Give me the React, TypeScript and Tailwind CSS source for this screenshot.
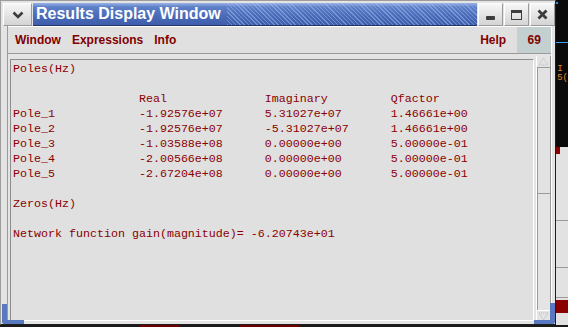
import React from "react";

const poles = [
  ["Pole_1", "-1.92576e+07", "5.31027e+07", "1.46661e+00"],
  ["Pole_2", "-1.92576e+07", "-5.31027e+07", "1.46661e+00"],
  ["Pole_3", "-1.03588e+08", "0.00000e+00", "5.00000e-01"],
  ["Pole_4", "-2.00566e+08", "0.00000e+00", "5.00000e-01"],
  ["Pole_5", "-2.67204e+08", "0.00000e+00", "5.00000e-01"],
];

const col = (s: string) => s.padEnd(18, " ");

const lines = [
  "Poles(Hz)",
  "",
  col("") + col("Real") + col("Imaginary") + "Qfactor",
  ...poles.map((p) => col(p[0]) + col(p[1]) + col(p[2]) + p[3]),
  "",
  "Zeros(Hz)",
  "",
  "Network function gain(magnitude)= -6.20743e+01",
];

function TitleButton({ children }: { children: React.ReactNode }) {
  return (
    <div className="w-[25px] h-[23px] ml-[1px] flex items-center justify-center border border-t-white border-l-white border-r-[#9a9a9a] border-b-[#9a9a9a] bg-[linear-gradient(to_bottom,#f6f6f6,#d4d4d4)]">
      {children}
    </div>
  );
}

export default function App() {
  return (
    <div className="w-[568px] h-[327px] flex flex-col bg-[#111] overflow-hidden font-['Liberation_Sans',Arial,sans-serif]">
      <div className="flex h-[325px]">
        {/* Window */}
        <div className="relative w-[562px] h-[325px] flex flex-col bg-[#e4e4e4] border-l border-t border-l-[#9c9c9c] border-t-[#9c9c9c] border-r border-b border-r-[#1e1e1e] border-b-[#1e1e1e] pl-[2px] pt-[2px]">
          {/* Title bar */}
          <div className="flex h-[23px] shrink-0">
            <div className="w-[29px] h-[23px] flex items-center justify-center border border-t-white border-l-white border-r-[#9a9a9a] border-b-[#9a9a9a] bg-[linear-gradient(to_bottom,#f6f6f6,#d4d4d4)]">
              <svg width="12" height="8" viewBox="0 0 12 8">
                <polyline points="1.5,1.5 6,6 10.5,1.5" fill="none" stroke="#3c3c3c" strokeWidth="2.6" />
              </svg>
            </div>
            <div className="flex-1 flex items-center ml-[1px] border-b border-b-[#23356a] bg-[linear-gradient(to_bottom,#9ab2e6_0%,#5e80c8_18%,#4b6cb9_55%,#3e5eab_100%)]">
              <span className="pl-[3px] text-white font-bold text-[16px] leading-none whitespace-nowrap">
                Results Display Window
              </span>
              <div className="flex-1 h-full ml-[6px] bg-[image:repeating-linear-gradient(45deg,rgba(170,195,245,0.45)_0px,rgba(170,195,245,0.45)_1px,transparent_1px,transparent_3px)]" />
            </div>
            <TitleButton>
              <div className="w-[9px] h-[4px] mt-[6px] bg-[#3c3c3c] rounded-[1px]" />
            </TitleButton>
            <TitleButton>
              <div className="w-[11px] h-[10px] border border-[#3c3c3c] border-t-[3px]" />
            </TitleButton>
            <TitleButton>
              <svg width="11" height="11" viewBox="0 0 11 11">
                <path d="M1.5 1.5 L9.5 9.5 M9.5 1.5 L1.5 9.5" stroke="#3c3c3c" strokeWidth="2.8" />
              </svg>
            </TitleButton>
          </div>

          {/* Below title */}
          <div className="flex flex-1">
            <div className="w-[4px]" />
            <div className="flex-1 flex flex-col border-l border-l-[#9a9a9a]">
              {/* Menu bar */}
              <div className="h-[28px] flex items-stretch border-t border-t-white border-b border-b-[#9a9a9a] bg-[#e0e0e0] text-[#800000] font-bold text-[12px]">
                <span className="flex items-center pl-[7px]">Window</span>
                <span className="flex items-center ml-[11px]">Expressions</span>
                <span className="flex items-center ml-[11px]">Info</span>
                <div className="flex-1" />
                <span className="flex items-center">Help</span>
                <span className="flex items-center justify-center w-[34px] ml-[11px] bg-[#c4d0d0]">69</span>
              </div>

              {/* Body */}
              <div className="flex flex-1 pb-[3px]">
                <div className="flex-1 ml-[2px] mt-[5px] border-t border-l border-t-[#8c8c8c] border-l-[#8c8c8c] border-r border-b border-r-white border-b-white bg-[#e0e0e0] pl-[2px] pt-[2px]">
                  <pre className="m-0 text-[#8a0000] text-[11.67px] leading-[15px] font-['Liberation_Mono','Courier_New',monospace]">
                    {lines.join("\n")}
                  </pre>
                </div>
                {/* Scrollbar */}
                <div className="w-[15px] ml-[2px] mt-[2px] flex flex-col border-l border-l-white">
                  <div className="h-[11px] flex items-center justify-center border-r border-r-[#9a9a9a]">
                    <svg width="11" height="9" viewBox="0 0 11 9">
                      <polygon points="5.5,1 10,8 1,8" fill="none" stroke="#b8b8b8" strokeWidth="1" strokeDasharray="1 1" />
                    </svg>
                  </div>
                  <div className="h-[127px] border border-[#9a9a9a] bg-[#e2e2e2]" />
                  <div className="flex-1 border-l border-r border-[#9a9a9a]" />
                  <div className="h-[11px] flex items-center justify-center border-r border-r-[#9a9a9a] border-t border-t-white">
                    <svg width="11" height="9" viewBox="0 0 11 9">
                      <polygon points="1,1 10,1 5.5,8" fill="none" stroke="#b8b8b8" strokeWidth="1" strokeDasharray="1 1" />
                    </svg>
                  </div>
                </div>
              </div>
            </div>
            <div className="w-[4px] border-l border-l-white" />
          </div>

          {/* Resize corners */}
          <div className="absolute left-[1px] bottom-0 w-[5px] h-[20px] bg-[#5878c0] rounded-bl-[3px]" />
          <div className="absolute left-[1px] bottom-0 w-[22px] h-[4px] bg-[#5878c0] rounded-bl-[3px]" />
          <div className="absolute right-0 bottom-0 w-[5px] h-[21px] bg-[#5878c0] rounded-br-[3px]" />
          <div className="absolute right-0 bottom-0 w-[21px] h-[4px] bg-[#5878c0] rounded-br-[3px]" />
        </div>

        {/* Desktop strip to the right */}
        <div className="flex-1 flex flex-col">
          <div className="h-[147px] bg-[#0a0a0a] flex flex-col">
            <div className="h-[2px] mt-[2px] bg-[#3a8ee0] w-[2px]" />
            <div className="h-[1px] mt-[38px] bg-[#3aa0ff]" />
            <div className="mt-[22px] ml-[1px] text-[9px] leading-[9px] text-[#e08a20] font-['Liberation_Mono',monospace]">
              I
              <br />
              5(
            </div>
          </div>
          <div className="flex-1 bg-[#e2e2e2] flex flex-col">
            <div className="h-[7px] bg-[#8a0000] w-[4px]" />
            <div className="h-[1px] mt-[66px] bg-[#9a9a9a]" />
            <div className="h-[1px] mt-[46px] bg-[#9a9a9a]" />
            <div className="h-[1px] mt-[29px] bg-[#9a9a9a]" />
            <div className="h-[13px] mt-[2px] bg-[#8a0000]" />
          </div>
        </div>
      </div>
      <div className="h-[2px] bg-[#1a1a1a] flex">
        <div className="w-[140px]" />
        <div className="w-[40px] bg-[#700000]" />
        <div className="w-[60px]" />
        <div className="w-[60px] bg-[#700000]" />
      </div>
    </div>
  );
}
